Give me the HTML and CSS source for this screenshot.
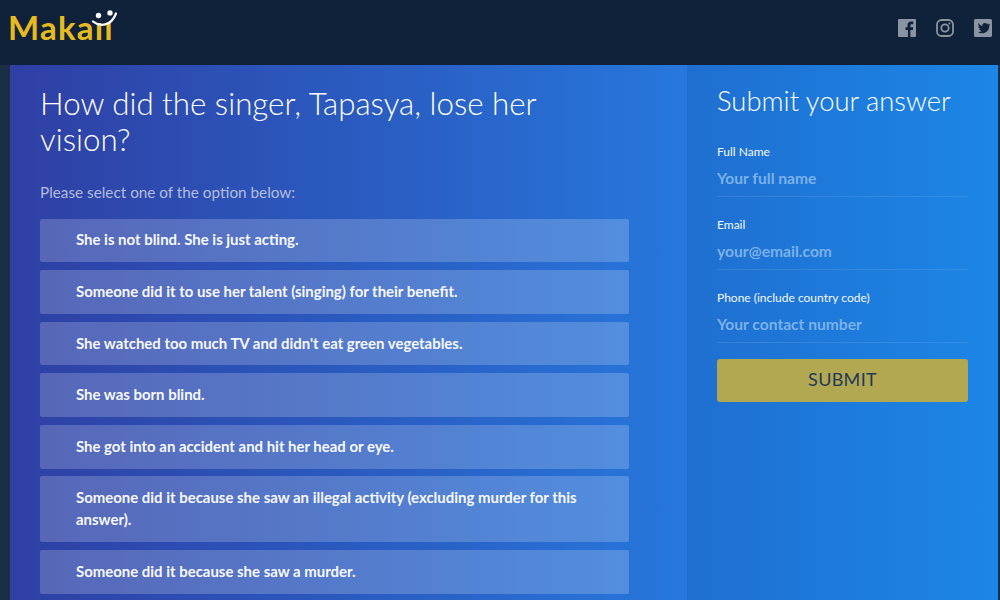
FILE: index.html
```html
<!DOCTYPE html>
<html lang="en">
<head>
<meta charset="utf-8">
<title>Makaii</title>
<link rel="stylesheet" href="styles.css">
</head>
<body>
<header class="top">
  <div class="logo">
    <span class="logo-text">Makaıı</span>
    <svg class="smile" width="30" height="20" viewBox="0 0 30 20" aria-hidden="true">
      <circle cx="7.500" cy="5.500" r="2.700" fill="#fff"/>
      <circle cx="19" cy="2.900" r="2.700" fill="#fff"/>
      <path d="M2 11.500 C9 17 20 16.500 25 3.500" fill="none" stroke="#fff" stroke-width="2.200" stroke-linecap="round"/>
    </svg>
  </div>
  <nav class="social">
    <svg width="18" height="18" viewBox="0 0 18 18" aria-hidden="true"><path fill="#8a94a3" d="M1 0h16a1 1 0 0 1 1 1v16a1 1 0 0 1-1 1h-4.600v-7h2.400l.4-2.800h-2.800V6.500c0-.8.3-1.300 1.400-1.300h1.500V2.700c-.3 0-1.200-.1-2.200-.1-2.200 0-3.600 1.300-3.600 3.700v1.900H7.500V11h2.400v7H1a1 1 0 0 1-1-1V1a1 1 0 0 1 1-1z"/></svg>
    <svg width="18" height="18" viewBox="0 0 18 18" aria-hidden="true"><g fill="none" stroke="#8a94a3"><rect x="1" y="1" width="16" height="16" rx="4.500" stroke-width="1.800"/><circle cx="9" cy="9" r="3.700" stroke-width="1.800"/></g><circle cx="13.500" cy="4.500" r="1.100" fill="#8a94a3"/></svg>
    <svg width="18" height="18" viewBox="0 0 18 18" aria-hidden="true"><path fill="#8a94a3" d="M1.500 0h15A1.500 1.500 0 0 1 18 1.500v15a1.500 1.500 0 0 1-1.500 1.500h-15A1.500 1.500 0 0 1 0 16.500v-15A1.500 1.500 0 0 1 1.500 0zm13.300 5.200c-.5.200-1 .4-1.500.4.500-.3 1-.8 1.200-1.400-.5.300-1.100.5-1.700.6a2.700 2.700 0 0 0-4.600 2.400A7.500 7.500 0 0 1 4.700 4c-.7 1.200-.4 2.800.8 3.600-.4 0-.8-.1-1.200-.3 0 1.300.9 2.400 2.100 2.700-.4.100-.8.100-1.200 0 .3 1.100 1.300 1.800 2.500 1.900-1.100.9-2.500 1.200-3.900 1.100 4.700 2.900 11.600.400 11.500-6.600.3-.2.700-.7.900-1.200z"/></svg>
  </nav>
</header>
<div class="stage">
  <main class="question">
    <h1 class="title">How did the singer, Tapasya, lose her vision?</h1>
    <p class="hint">Please select one of the option below:</p>
    <ul class="options">
      <li class="option">She is not blind. She is just acting.</li>
      <li class="option">Someone did it to use her talent (singing) for their benefit.</li>
      <li class="option">She watched too much TV and didn't eat green vegetables.</li>
      <li class="option">She was born blind.</li>
      <li class="option">She got into an accident and hit her head or eye.</li>
      <li class="option">Someone did it because she saw an illegal activity (excluding murder for this answer).</li>
      <li class="option">Someone did it because she saw a murder.</li>
    </ul>
  </main>
  <aside class="answer">
    <h2 class="answer-title">Submit your answer</h2>
    <form class="form">
      <label class="field"><span class="label">Full Name</span><input class="input" placeholder="Your full name"></label>
      <label class="field"><span class="label">Email</span><input class="input" placeholder="your@email.com"></label>
      <label class="field"><span class="label">Phone (include country code)</span><input class="input" placeholder="Your contact number"></label>
      <button class="submit" type="button">SUBMIT</button>
    </form>
  </aside>
</div>
</body>
</html>
```
FILE: styles.css
```css
* { box-sizing: border-box; }
html, body { margin: 0; height: 100%; overflow: hidden; }
body {
  background: #1a2e46;
  font-family: "Lato", "Open Sans", sans-serif;
  color: #fff;
  display: flex;
  flex-direction: column;
  height: 600px;
}
.top {
  height: 65px;
  flex: none;
  background: #10213a;
  display: flex;
  justify-content: space-between;
  padding: 10px 0 0 8px;
}
.logo { position: relative; height: 34px; }
.logo-text {
  font-size: 33px;
  line-height: 34px;
  font-weight: 700;
  color: #e6bb1f;
  letter-spacing: 1.200px;
}
.smile { position: absolute; left: 83px; top: 0; }
.social { display: flex; gap: 20px; padding: 9px 8px 0 0; }
.stage {
  flex: 1;
  margin: 0 2px 0 10px;
  display: flex;
  background: linear-gradient(90deg, #2f3fa4 0%, #2a5fc4 40%, #2777dc 68%, #1f88e6 100%);
  min-height: 0;
}
.question { width: 677px; flex: none; padding: 20px 58px 0 30px; }
.title {
  margin: 0;
  font-size: 31.300px;
  line-height: 36px;
  font-weight: 300;
  color: #fff;
}
.hint {
  margin: 24px 0 0;
  font-size: 15.300px;
  line-height: 22px;
  color: #b4bddf;
}
.options { list-style: none; margin: 15.500px 0 0; padding: 0; display: flex; flex-direction: column; gap: 7.900px; }
.option {
  padding: 10.900px 36px;
  font-size: 14.950px;
  line-height: 21.900px;
  font-weight: 700;
  background: rgba(255,255,255,.2);
  border-radius: 2px;
  color: #f6f8fc;
}
.answer {
  flex: 1;
  background: linear-gradient(90deg, #1f6fd0, #1c86e6);
  padding: 20px 30px 0;
}
.answer-title {
  margin: 0;
  font-size: 27.400px;
  line-height: 32px;
  font-weight: 300;
  color: #fff;
}
.form { margin-top: 25px; display: flex; flex-direction: column; }
.field { display: block; margin-bottom: 18px; padding-top: 1px; border-bottom: 1px solid rgba(255,255,255,.1); }
.label { display: block; font-size: 12px; line-height: 18px; color: #f4f8fd; }
.input {
  display: block;
  width: 100%;
  height: 35px;
  padding: 0 0 2px;
  border: 0;
  background: transparent;
  font: 700 15.600px "Lato", sans-serif;
  color: #fff;
  outline: 0;
}
.input::placeholder { color: #7bb1ea; opacity: 1; }
.submit {
  height: 43px;
  margin-top: -2px;
  padding-bottom: 5px;
  border: 0;
  border-radius: 3px;
  background: #b3a852;
  color: #1f3a57;
  font: 400 18px "Lato", sans-serif;
  letter-spacing: .3px;
}
```
